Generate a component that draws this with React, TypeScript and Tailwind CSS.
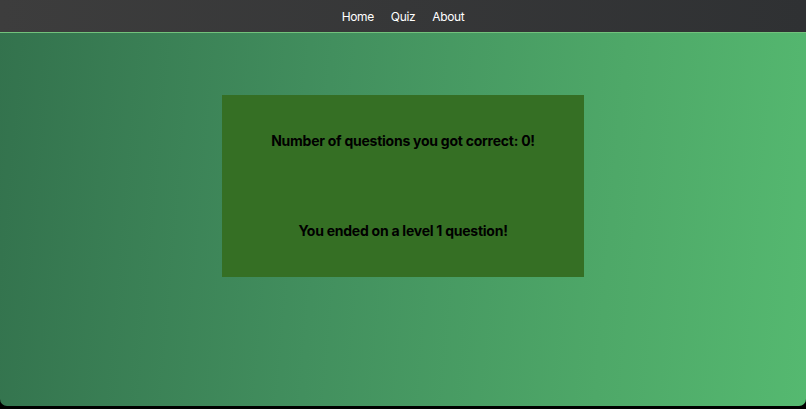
export default function App() {
  return (
    <div className="h-[409px] w-[806px] bg-black font-['Inter',sans-serif]">
      <div className="flex h-[406px] flex-col overflow-hidden rounded-b-[7px] bg-[linear-gradient(95deg,#33724d_0%,#428f5e_40%,#4ea868_75%,#55b970_100%)]">
        <nav className="flex h-[33px] items-center justify-center gap-[17px] border-b-[1.5px] border-[#72c27c] bg-[linear-gradient(90deg,#3d3d3d,#2f3133)] pt-[2px] text-[12px] tracking-[-0.35px] text-white">
          <a>Home</a>
          <a>Quiz</a>
          <a>About</a>
        </nav>
        <div className="flex justify-center pt-[62px]">
          <div className="flex h-[182px] w-[362px] flex-col items-center bg-[#356f24] text-[14px] font-bold tracking-[-0.25px] text-black">
            <p className="mt-[35px]">Number of questions you got correct: 0!</p>
            <p className="mt-[69px]">You ended on a level 1 question!</p>
          </div>
        </div>
      </div>
    </div>
  );
}
